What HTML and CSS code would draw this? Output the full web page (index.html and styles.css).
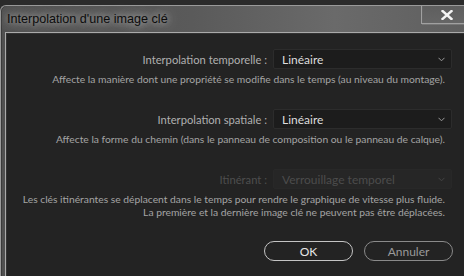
FILE: index.html
```html
<!DOCTYPE html>
<html lang="fr">
<head>
    <meta charset="UTF-8">
    <title>Interpolation d'une image clé</title>
    <link rel="stylesheet" href="styles.css">
</head>
<body>
    <div class="window">
        <div class="titlebar">
            <span class="title">Interpolation d'une image clé</span>
            <div class="close">
                <svg width="12" height="10" viewBox="0 0 12 10">
                    <path d="M1.5 1 L10.5 9 M10.5 1 L1.5 9" stroke="#f4f4f4" stroke-width="2.4" stroke-linecap="square"/>
                </svg>
            </div>
        </div>
        <div class="panel">
            <div class="form">
                <div class="row">
                    <span class="label">Interpolation temporelle :</span>
                    <div class="select">
                        <span>Linéaire</span>
                        <svg class="chev" width="7" height="5" viewBox="0 0 7 5"><path d="M0.5 0.8 L3.5 3.8 L6.5 0.8" fill="none" stroke="#9a9a9a" stroke-width="1"/></svg>
                    </div>
                </div>
                <p class="desc">Affecte la manière dont une propriété se modifie dans le temps (au niveau du montage).</p>

                <div class="row">
                    <span class="label">Interpolation spatiale :</span>
                    <div class="select">
                        <span>Linéaire</span>
                        <svg class="chev" width="7" height="5" viewBox="0 0 7 5"><path d="M0.5 0.8 L3.5 3.8 L6.5 0.8" fill="none" stroke="#9a9a9a" stroke-width="1"/></svg>
                    </div>
                </div>
                <p class="desc">Affecte la forme du chemin (dans le panneau de composition ou le panneau de calque).</p>

                <div class="row disabled">
                    <span class="label">Itinérant :</span>
                    <div class="select">
                        <span>Verrouillage temporel</span>
                        <svg class="chev" width="7" height="5" viewBox="0 0 7 5"><path d="M0.5 0.8 L3.5 3.8 L6.5 0.8" fill="none" stroke="#444" stroke-width="1"/></svg>
                    </div>
                </div>
                <p class="desc">Les clés itinérantes se déplacent dans le temps pour rendre le graphique de vitesse plus fluide.<br>La première et la dernière image clé ne peuvent pas être déplacées.</p>

                <div class="buttons">
                    <button class="btn ok">OK</button>
                    <button class="btn cancel">Annuler</button>
                </div>
            </div>
        </div>
    </div>
</body>
</html>
```

FILE: styles.css
```css
html, body {
    margin: 0;
    height: 100%;
    overflow: hidden;
}
body {
    background: #2b2b2b;
    font-family: 'Lato', sans-serif;
}
.window {
    margin-top: 5px;
    width: 477px;
    height: calc(100% - 6px);
    border: 1px solid #9a9a9a;
    border-right: none;
    border-bottom: none;
    border-top-left-radius: 6px;
    background: linear-gradient(90deg, #505050 0%, #5a5a5a 40%, #6a6a6a 70%, #5e5e5e 100%);
    box-shadow: inset 1px 0 0 #3a3a3a;
    display: flex;
    flex-direction: column;
}
.titlebar {
    display: flex;
    align-items: flex-start;
    height: 26px;
    flex: none;
    padding-left: 6px;
    padding-right: 6px;
}
.title {
    margin-top: 6px;
    font-family: 'Liberation Sans', sans-serif;
    font-size: 12.6px;
    color: #0c0c0c;
    text-shadow: 0 0 6px #a8a8a8, 0 0 12px #9a9a9a, 0 0 16px #9a9a9a;
}
.close {
    margin-left: auto;
    width: 49px;
    height: 17px;
    border: 1px solid #a0a0a0;
    border-top: none;
    box-shadow: inset 1px 0 0 #666, inset 0 -1px 0 #666, 1px 1px 0 #777;
    background: linear-gradient(#5e5e5e, #666);
    display: flex;
    align-items: center;
    justify-content: center;
}
.panel {
    flex: 1;
    margin-left: 4px;
    border: 1px solid #aaa;
    border-right: none;
    border-bottom: none;
    background: #232323;
    box-shadow: inset 1px 1px 0 #333;
}
.form {
    width: 446px;
    padding-top: 16px;
    display: flex;
    flex-direction: column;
}
.row {
    display: flex;
    justify-content: flex-end;
    align-items: center;
    gap: 6px;
    height: 20px;
}
.label {
    font-size: 11.2px;
    color: #b0b0b0;
}
.select {
    width: 177px;
    height: 18px;
    border: 1px solid #2c2c2c;
    border-radius: 2px;
    background: #1c1c1c;
    display: flex;
    align-items: center;
    font-size: 12px;
    color: #dedede;
}
.select span {
    margin-left: 8px;
}
.chev {
    margin-left: auto;
    margin-right: 6px;
}
.disabled .label {
    color: #4e4e4e;
}
.disabled .select {
    background: #262626;
    border-color: #282828;
    color: #4c4c4c;
}
.desc {
    margin: 4px 0 23px;
    padding-right: 7px;
    text-align: right;
    white-space: nowrap;
    font-size: 10.3px;
    line-height: 13px;
    color: #a4a4a4;
}
.buttons {
    display: flex;
    justify-content: flex-end;
    gap: 11px;
    margin-top: -1px;
    margin-right: -1px;
}
.btn {
    width: 89px;
    height: 20px;
    border-radius: 10px;
    background: #232323;
    font-family: 'Lato', sans-serif;
    font-size: 12px;
    padding: 0;
}
.ok {
    border: 1px solid #c4c4c4;
    color: #e6e6e6;
}
.cancel {
    border: 1px solid #8a8a8a;
    color: #9a9a9a;
}
```
